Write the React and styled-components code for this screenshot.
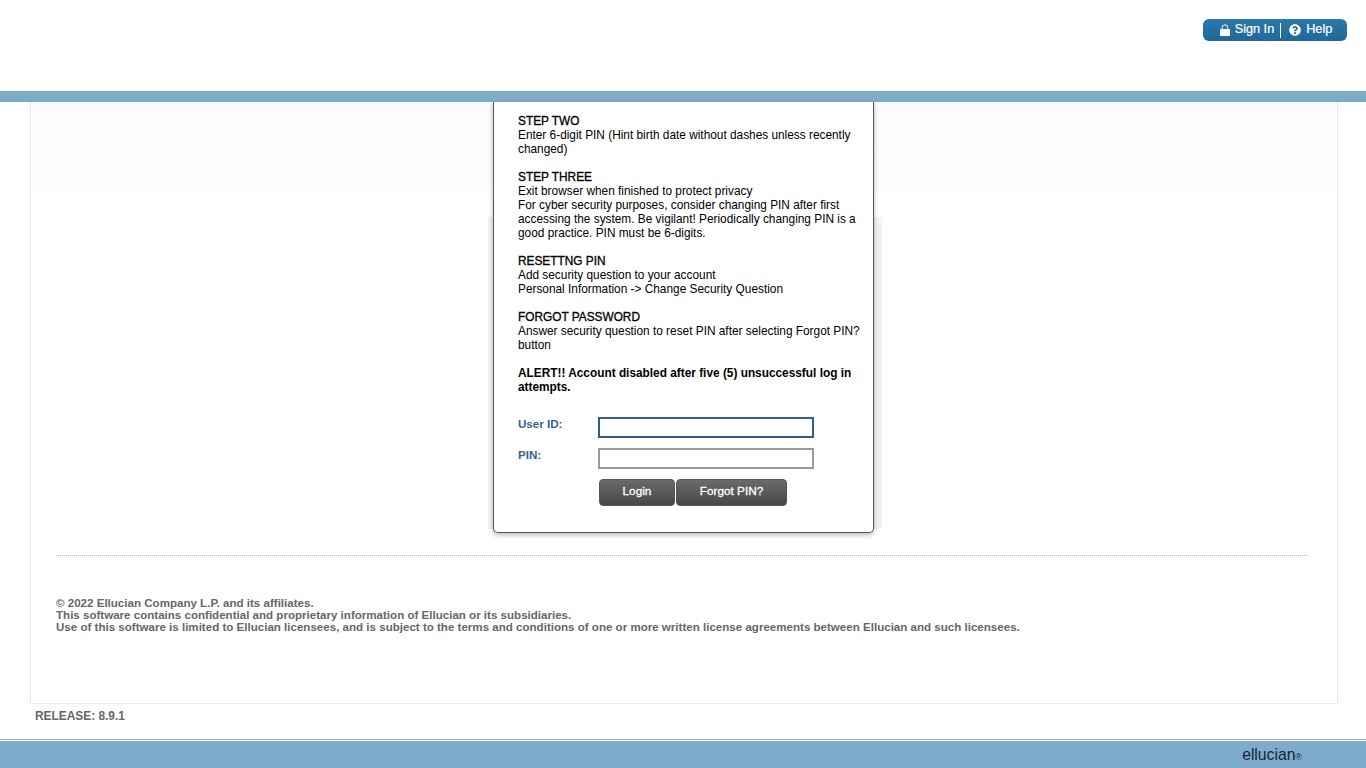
import React from 'react'
import styled, { createGlobalStyle } from 'styled-components'
import { FaQuestionCircle } from 'react-icons/fa'

const GlobalStyle = createGlobalStyle`
  html, body {
    margin: 0;
    padding: 0;
    background: #fff;
    font-family: "Liberation Sans", Arial, sans-serif;
  }
`

const Page = styled.div`
  width: 1366px;
  height: 768px;
  display: flex;
  flex-direction: column;
  overflow: hidden;
  background: #fff;
`

const Header = styled.header`
  height: 91px;
  display: flex;
  justify-content: flex-end;
  align-items: flex-start;
  padding: 19px 19px 0 0;
  box-sizing: border-box;
`

const AccountPill = styled.div`
  width: 144px;
  height: 22px;
  box-sizing: border-box;
  display: flex;
  align-items: center;
  justify-content: center;
  padding: 0 0 3px 2px;
  background: linear-gradient(#2a77a8, #20699a);
  border-radius: 6px;
  color: #fff;
  font-size: 12.7px;
  -webkit-text-stroke: 0.2px #fff;
`

const PillItem = styled.span`
  display: inline-flex;
  align-items: center;
  gap: 5px;
  svg {
    font-size: 12px;
    margin-top: 2px;
  }
`

const PillDivider = styled.span`
  width: 1px;
  height: 15px;
  margin: 3px 8px 0 6px;
  background: #fff;
`

const TopBar = styled.div`
  height: 11px;
  background: #7fabca;
`

const Panel = styled.main`
  width: 1308px;
  height: 602px;
  margin-left: 30px;
  box-sizing: border-box;
  border: 1px solid #e9e9e9;
  border-top: none;
  background: linear-gradient(#fbfbfd 0, #fdfdfe 85px, #fff 95px);
  display: flex;
  flex-direction: column;
`

const CardBand = styled.div`
  align-self: flex-start;
  margin-left: 457px;
  padding: 0 8px 0 5px;
  background: linear-gradient(transparent 115px, #f3f3f3 115px);
  height: 427px;
`

const Card = styled.section`
  width: 381px;
  height: 431px;
  box-sizing: border-box;
  padding: 12px 10px 0 24px;
  background: #fff;
  border: 1px solid #555;
  border-top: none;
  border-radius: 0 0 5px 5px;
  box-shadow: 0 2px 5px rgba(0, 0, 0, 0.28);
  color: #000;
  font-size: 11.85px;
  line-height: 14px;
`

const Block = styled.p`
  margin: 0 0 14px;
`

const Heading = styled.span`
  display: block;
  -webkit-text-stroke: 0.3px #000;
`

const Alert = styled.p`
  margin: 0 0 23px;
  font-weight: bold;
`

const FieldRow = styled.div`
  display: flex;
  align-items: flex-start;
  margin-bottom: 10px;
`

const FieldLabel = styled.label`
  width: 80px;
  color: #35628f;
  font-weight: bold;
  font-size: 11.6px;
`

const TextInput = styled.input`
  width: 216px;
  height: 21px;
  box-sizing: border-box;
  padding: 0;
  outline: none;
  background: #fff;
  border: 2px solid ${p => (p.$focused ? '#2c5f8f' : '#999')};
`

const ButtonRow = styled.div`
  display: flex;
  margin-left: 81px;
`

const ActionButton = styled.button`
  width: ${p => p.$width}px;
  height: 27px;
  padding: 0 0 3px;
  margin-right: 1px;
  border: 1px solid #555;
  border-radius: 4px;
  background: linear-gradient(#6b6b6b, #474747);
  color: #fff;
  font-family: inherit;
  font-size: 11.8px;
  -webkit-text-stroke: 0.3px #fff;
`

const Divider = styled.hr`
  width: 1251px;
  margin: 26px 0 0 25px;
  border: none;
  border-top: 1px dotted #bbb;
`

const Legal = styled.div`
  margin: 41px 0 0 25px;
  color: #666;
  font-size: 11.57px;
  font-weight: bold;
  line-height: 12px;
`

const Release = styled.div`
  height: 35px;
  padding: 5px 0 0 35px;
  box-sizing: border-box;
  color: #666;
  font-size: 11.9px;
  font-weight: bold;
  line-height: 14px;
`

const Footer = styled.footer`
  flex: 1;
  display: flex;
  justify-content: flex-end;
  align-items: center;
  padding: 2px 64px 0 0;
  background: #7fabca;
  border-top: 1px solid #93aebe;
  box-shadow: inset 0 1px 0 #fff;
  color: #10253a;
  font-size: 15.7px;
`

const Registered = styled.span`
  font-size: 9px;
  margin-top: 4px;
`

const LockIcon = () => (
  <svg width="10" height="12" viewBox="0 0 10 12" fill="none">
    <path d="M2.2 5.5V3.6a2.8 2.8 0 0 1 5.6 0v1.9" stroke="#fff" strokeWidth="1" />
    <rect x="0" y="5" width="10" height="7" rx="0.8" fill="#fff" />
  </svg>
)

export default function App() {
  return (
    <Page>
      <GlobalStyle />
      <Header>
        <AccountPill>
          <PillItem><LockIcon />Sign In</PillItem>
          <PillDivider />
          <PillItem><FaQuestionCircle />Help</PillItem>
        </AccountPill>
      </Header>
      <TopBar />
      <Panel>
        <CardBand>
          <Card>
            <Block>
              <Heading>STEP TWO</Heading>
              Enter 6-digit PIN (Hint birth date without dashes unless recently changed)
            </Block>
            <Block>
              <Heading>STEP THREE</Heading>
              Exit browser when finished to protect privacy<br />
              For cyber security purposes, consider changing PIN after first accessing the system. Be vigilant! Periodically changing PIN is a good practice. PIN must be 6-digits.
            </Block>
            <Block>
              <Heading>RESETTNG PIN</Heading>
              Add security question to your account<br />
              Personal Information -&gt; Change Security Question
            </Block>
            <Block>
              <Heading>FORGOT PASSWORD</Heading>
              Answer security question to reset PIN after selecting Forgot PIN? button
            </Block>
            <Alert>ALERT!! Account disabled after five (5) unsuccessful log in attempts.</Alert>
            <FieldRow>
              <FieldLabel>User ID:</FieldLabel>
              <TextInput $focused />
            </FieldRow>
            <FieldRow>
              <FieldLabel>PIN:</FieldLabel>
              <TextInput type="password" />
            </FieldRow>
            <ButtonRow>
              <ActionButton $width={76}>Login</ActionButton>
              <ActionButton $width={111}>Forgot PIN?</ActionButton>
            </ButtonRow>
          </Card>
        </CardBand>
        <Divider />
        <Legal>
          © 2022 Ellucian Company L.P. and its affiliates.<br />
          This software contains confidential and proprietary information of Ellucian or its subsidiaries.<br />
          Use of this software is limited to Ellucian licensees, and is subject to the terms and conditions of one or more written license agreements between Ellucian and such licensees.
        </Legal>
      </Panel>
      <Release>RELEASE: 8.9.1</Release>
      <Footer>ellucian<Registered>®</Registered></Footer>
    </Page>
  )
}
